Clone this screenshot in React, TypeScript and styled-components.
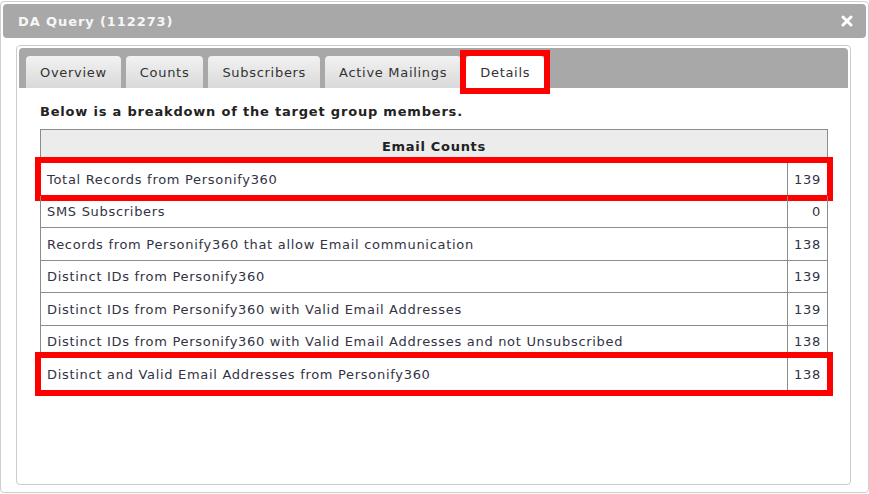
import React, { FC } from 'react';
import styled, { createGlobalStyle } from 'styled-components';

const GlobalStyle = createGlobalStyle`
  html, body {
    margin: 0;
    padding: 0;
    background: #ffffff;
  }
  body {
    font-family: 'DejaVu Sans', Verdana, sans-serif;
    font-size: 13px;
    letter-spacing: 0.7px;
    color: #333333;
  }
`;

const Dialog = styled.div`
  box-sizing: border-box;
  margin-top: 1px;
  width: 869px;
  height: 492px;
  border: 1px solid #cfcfcf;
  border-radius: 4px;
  padding: 2px;
  display: flex;
  flex-direction: column;
  background: #ffffff;
`;

const TitleBar = styled.div`
  height: 34px;
  background: #a8a8a8;
  border-radius: 4px;
  display: flex;
  align-items: center;
  justify-content: space-between;
  padding: 0 12px 0 15px;
`;

const Title = styled.span`
  font-weight: bold;
  font-size: 13px;
  letter-spacing: 0.9px;
  color: #f7f7f7;
`;

const CloseButton = styled.button`
  background: transparent;
  border: 0;
  padding: 0;
  width: 14px;
  height: 14px;
  display: flex;
  align-items: center;
  justify-content: center;
  cursor: pointer;
`;

const Panel = styled.div`
  box-sizing: border-box;
  margin: 7px 15px 0 13px;
  height: 440px;
  border: 1px solid #cccccc;
  border-radius: 4px;
  padding: 2px;
  display: flex;
  flex-direction: column;
`;

const TabBar = styled.div`
  height: 40px;
  box-sizing: border-box;
  background: #a8a8a8;
  border-radius: 4px 4px 0 0;
  padding: 8px 0 0 7px;
  display: flex;
  align-items: flex-end;
  gap: 5px;
`;

const TabWrap = styled.div`
  position: relative;
  display: flex;
`;

const Tab = styled.div<{ $active?: boolean }>`
  height: 32px;
  box-sizing: border-box;
  padding: 0 14px;
  display: flex;
  align-items: center;
  border-radius: 4px 4px 0 0;
  color: #333333;
  background: ${(p) =>
    p.$active ? '#ffffff' : 'linear-gradient(#f2f2f2, #d9d9d9)'};
`;

const Highlight = styled.div`
  position: absolute;
  top: -6px;
  left: -6px;
  right: -6px;
  bottom: -6px;
  border: 6px solid #ff0000;
  pointer-events: none;
`;

const Content = styled.div`
  padding: 16px 20px 0 21px;
`;

const Intro = styled.p`
  margin: 0 0 10px;
  font-weight: bold;
  letter-spacing: 0.8px;
  color: #222222;
`;

const Table = styled.div`
  width: 788px;
  border-top: 1px solid #8c8c8c;
`;

const HeaderRow = styled.div`
  height: 32px;
  background: #ececec;
  border-left: 1px solid #8c8c8c;
  border-right: 1px solid #8c8c8c;
  border-bottom: 1px solid #8c8c8c;
  display: flex;
  align-items: center;
  justify-content: center;
  font-weight: bold;
  color: #222222;
`;

const Row = styled.div`
  position: relative;
  height: 32.5px;
  box-sizing: border-box;
  display: grid;
  grid-template-columns: 1fr 40px;
  border-left: 1px solid #8c8c8c;
  border-right: 1px solid #8c8c8c;
  border-bottom: 1px solid #8c8c8c;
`;

const LabelCell = styled.div`
  display: flex;
  align-items: center;
  padding: 1px 0 0 6px;
  color: #333344;
`;

const ValueCell = styled.div`
  display: flex;
  align-items: center;
  justify-content: flex-end;
  padding: 1px 6px 0 0;
  border-left: 1px solid #8c8c8c;
  color: #333344;
`;

const tabs = ['Overview', 'Counts', 'Subscribers', 'Active Mailings', 'Details'];

const rows = [
  { label: 'Total Records from Personify360', value: 139, marked: true },
  { label: 'SMS Subscribers', value: 0 },
  { label: 'Records from Personify360 that allow Email communication', value: 138 },
  { label: 'Distinct IDs from Personify360', value: 139 },
  { label: 'Distinct IDs from Personify360 with Valid Email Addresses', value: 139 },
  {
    label: 'Distinct IDs from Personify360 with Valid Email Addresses and not Unsubscribed',
    value: 138,
  },
  { label: 'Distinct and Valid Email Addresses from Personify360', value: 138, marked: true },
];

const App: FC = function App() {
  return (
    <>
      <GlobalStyle />
      <Dialog>
        <TitleBar>
          <Title>DA Query (112273)</Title>
          <CloseButton aria-label="close">
            <svg width="12" height="12" viewBox="0 0 12 12">
              <path
                d="M2 2 L10 10 M10 2 L2 10"
                stroke="#ffffff"
                strokeWidth="3"
                strokeLinecap="round"
              />
            </svg>
          </CloseButton>
        </TitleBar>
        <Panel>
          <TabBar>
            {tabs.map((t) => (
              <TabWrap key={t}>
                <Tab $active={t === 'Details'}>{t}</Tab>
                {t === 'Details' && <Highlight />}
              </TabWrap>
            ))}
          </TabBar>
          <Content>
            <Intro>Below is a breakdown of the target group members.</Intro>
            <Table>
              <HeaderRow>Email Counts</HeaderRow>
              {rows.map((r) => (
                <Row key={r.label}>
                  <LabelCell>{r.label}</LabelCell>
                  <ValueCell>{r.value}</ValueCell>
                  {r.marked && <Highlight />}
                </Row>
              ))}
            </Table>
          </Content>
        </Panel>
      </Dialog>
    </>
  );
};

export default App;
